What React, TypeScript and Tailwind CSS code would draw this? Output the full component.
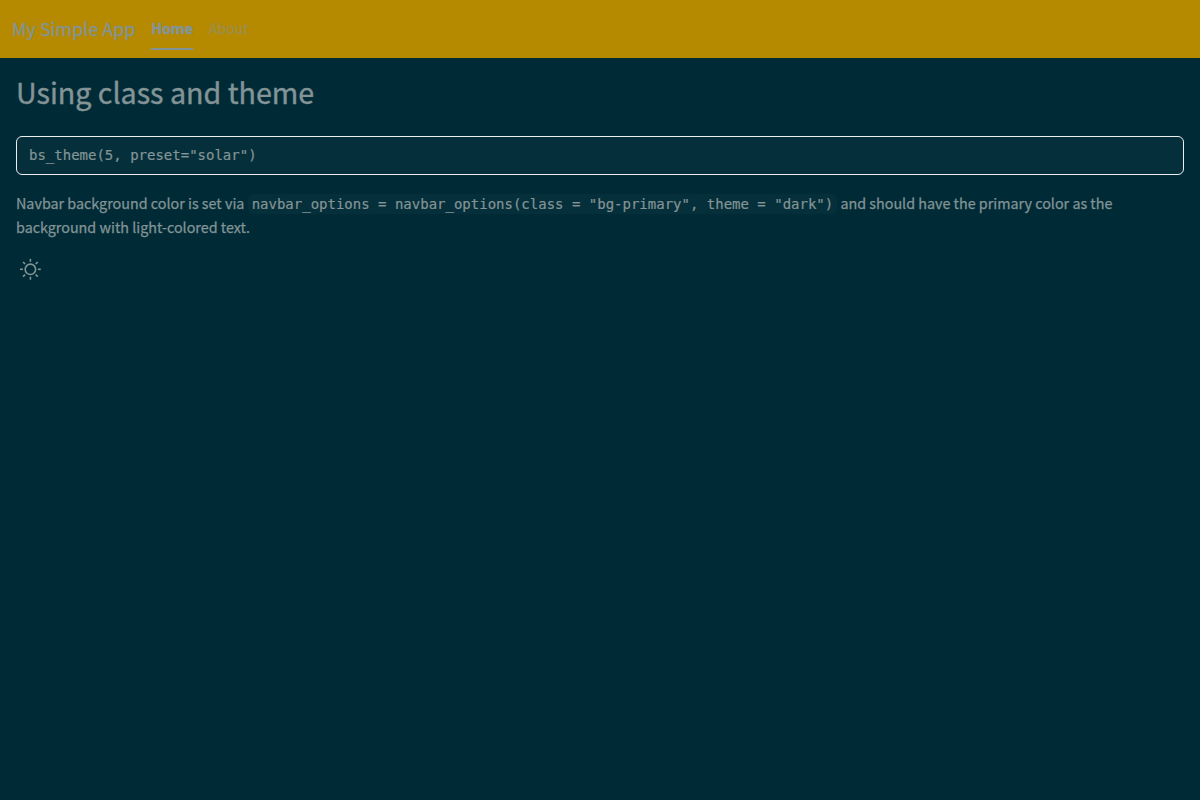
const rays = [0, 45, 90, 135, 180, 225, 270, 315];

function SunIcon() {
  return (
    <svg viewBox="0 0 24 24" className="block size-6" fill="none" stroke="currentColor" strokeWidth="1.6">
      <circle cx="12.4" cy="12.3" r="5.2" />
      {rays.map((angle) => (
        <path key={angle} d="M12.4 1.9v2.9" transform={`rotate(${angle} 12.4 12.3)`} />
      ))}
    </svg>
  );
}

function Navbar() {
  return (
    <nav className="flex h-[58px] items-start bg-[#b58900] px-3 pt-2 text-[#839496] [-webkit-text-stroke:0.3px]">
      <a className="mr-4 pt-[5px] text-[17.95px] leading-[31px] whitespace-nowrap">My Simple App</a>
      <ul className="flex gap-4">
        <li className="h-[42px] border-b-2 border-[#839496] pt-[7px] text-[14.2px] leading-[26px] font-bold [-webkit-text-stroke:0.6px]">Home</li>
        <li className="pt-[7px] text-[14.1px] leading-[26px] text-[#9c8f4b]">About</li>
      </ul>
    </nav>
  );
}

export default function App() {
  return (
    <div className="min-h-screen bg-[#002b36] font-['Noto_Sans_CJK_SC',sans-serif] text-[#839496]">
      <Navbar />
      <main className="px-4 pt-[15px] [-webkit-text-stroke:0.25px]">
        <h2 className="mb-[25px] text-[28.65px] leading-[38px] [-webkit-text-stroke:0.4px]">Using class and theme</h2>
        <pre className="mb-4 h-[39px] rounded-md border border-[#eeeeee] bg-[#052f3a] px-3 pt-2 font-['DejaVu_Sans_Mono',monospace] text-sm leading-[21px] [-webkit-text-stroke:0.2px]">
          bs_theme(5, preset="solar")
        </pre>
        <p className="mb-4 text-[14.33px] leading-6">
          Navbar background color is set via{" "}
          <code className="rounded-md bg-[#052f3a] px-1 py-0.5 font-['DejaVu_Sans_Mono',monospace] text-sm leading-none [-webkit-text-stroke:0.2px]">
            navbar_options = navbar_options(class = "bg-primary", theme = "dark")
          </code>{" "}
          and should have the primary color as the background with light-colored text.
        </p>
        <button className="block p-0.5" aria-label="Toggle color mode">
          <SunIcon />
        </button>
      </main>
    </div>
  );
}
